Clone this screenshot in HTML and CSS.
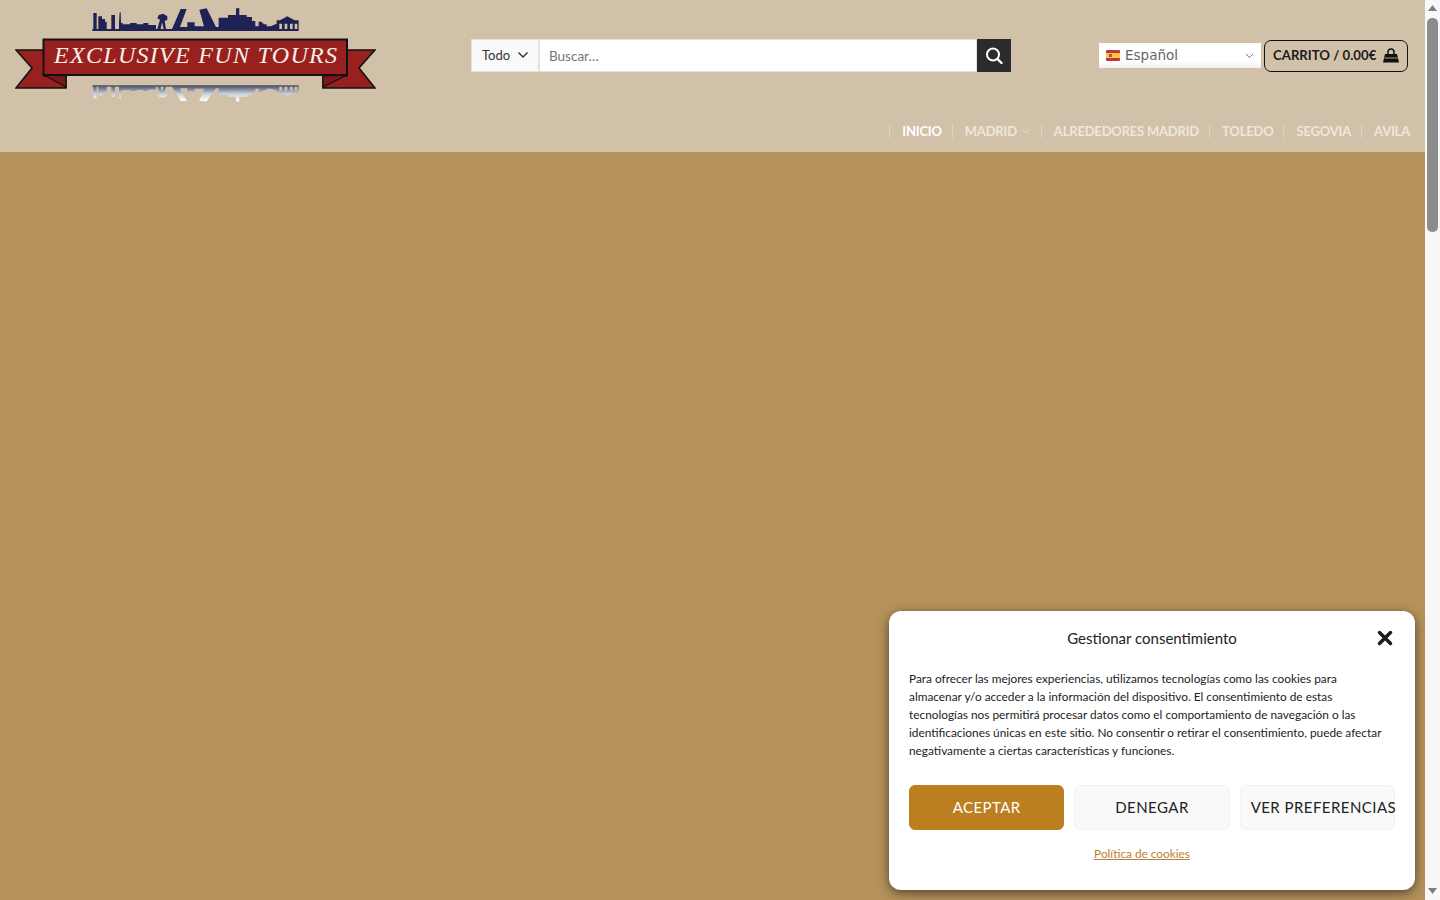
FILE: index.html
```html
<!DOCTYPE html>
<html lang="es">
<head>
    <meta charset="UTF-8">
    <meta name="viewport" content="width=device-width, initial-scale=1.0">
    <title>Exclusive Fun Tours</title>

    <link rel="stylesheet" href="styles.css">
</head>
<body>

    <div class="page">
        <header class="header">
            <div class="header-top">
                <a class="logo" href="#">
                    <svg width="361" height="96" viewBox="15 7 361 96">
                        <defs>
                            <linearGradient id="fade" x1="0" y1="0" x2="0" y2="1">
                                <stop offset="0.1" stop-color="#ffffff"></stop>
                                <stop offset="0.5" stop-color="#c5ccd8"></stop>
                                <stop offset="1" stop-color="#3c4360"></stop>
                            </linearGradient>
                            <path id="skyline" fill-rule="evenodd" transform="translate(80 0) scale(.3333)" d="M37 90V84H40V36H50V84H55V46H66V54H75V62H80V84H94V42H105V84H117V66L119 34H122L123 66H128V70H150V66H170V70H190V66H205V72H228V84H232L240 56L232 52L236 42L250 38L262 46L262 56L254 60L258 84H276L302 24H320L300 78H322V64H344V76H372L358 26L380 22L408 78H416V50H444V42H468V22H478V42H500V48H516V60H526V76H536V62H544L552 70H560V76H572L590 68V58H600L622 46L644 58H656V90ZM598 68H606V84H598ZM614 68H622V84H614ZM630 68H638V84H630ZM644 68H652V84H644ZM242 84L246 64L251 84Z"></path>
                        </defs>
                        <use href="#skyline" fill="#1f2255"></use>
                        <use href="#skyline" fill="url(#fade)" transform="translate(0 85) scale(1 -.72) translate(0 -29)" opacity="0.95"></use>

                        <polygon points="16,49 44,49 44,75 66,75 66,87 16,87 32,67" fill="#98201f" stroke="#111" stroke-width="1.6"></polygon>
                        <polygon points="375,49 347,49 347,75 323,75 323,87 375,87 359,67" fill="#98201f" stroke="#111" stroke-width="1.6"></polygon>
                        <polygon points="44,74 66,86 66,75" fill="#7e1719" stroke="#111" stroke-width="1.2"></polygon>
                        <polygon points="347,74 323,86 323,75" fill="#7e1719" stroke="#111" stroke-width="1.2"></polygon>
                        <rect x="43.5" y="38.500" width="303.5" height="35.500" fill="#98201f" stroke="#111" stroke-width="2"></rect>
                        <text class="logo-text" x="54" y="62" textLength="283" lengthAdjust="spacing">EXCLUSIVE FUN TOURS</text>
                    </svg>
                </a>

                <form class="search">
                    <div class="search-cat">
                        <span>Todo</span>
                        <svg width="12" height="8" viewBox="0 0 12 8"><path d="M1.5 1.5L6 6l4.500-4.500" fill="none" stroke="#333" stroke-width="1.400"></path></svg>
                    </div>
                    <div class="search-input">Buscar…</div>
                    <div class="search-btn">
                        <svg width="18" height="18" viewBox="0 0 18 18"><circle cx="8" cy="7.500" r="6" fill="none" stroke="#fff" stroke-width="2"></circle><path d="M12.500 12L16.500 16" stroke="#fff" stroke-width="2.400" stroke-linecap="round"></path></svg>
                    </div>
                </form>

                <div class="lang">
                    <svg class="flag" width="14" height="11" viewBox="0 0 14 11">
                        <rect width="14" height="11" rx="1" fill="#c8333a"></rect>
                        <rect y="3" width="14" height="5" fill="#f6c945"></rect>
                        <rect x="3" y="4" width="3" height="3" fill="#b5573a"></rect>
                    </svg>
                    <span class="lang-name">Español</span>
                    <svg class="lang-arrow" width="9" height="6" viewBox="0 0 9 6"><path d="M1 1l3.500 3.500L8 1" fill="none" stroke="#777" stroke-width="1"></path></svg>
                </div>

                <a class="cart" href="#">
                    <span>CARRITO / 0.00€</span>
                    <svg width="16" height="15" viewBox="0 0 16 15">
                        <path d="M5 6V4a3 3 0 0 1 6 0v2" fill="none" stroke="#111" stroke-width="1.500"></path>
                        <path d="M2 6H14L16 14.500H0Z" fill="#111"></path>
                        <path d="M1.500 10H14.500" stroke="#d2c1a9" stroke-width="0.800"></path>
                    </svg>
                </a>
            </div>

            <nav class="nav">
                <a class="nav-item nav-active" href="#">INICIO</a>
                <a class="nav-item" href="#">MADRID
                    <svg width="10" height="6" viewBox="0 0 10 6"><path d="M1 1l4 4 4-4" fill="none" stroke="#e6dccb" stroke-width="1"></path></svg>
                </a>
                <a class="nav-item" href="#">ALREDEDORES MADRID</a>
                <a class="nav-item" href="#">TOLEDO</a>
                <a class="nav-item" href="#">SEGOVIA</a>
                <a class="nav-item" href="#">AVILA</a>
            </nav>
        </header>

        <main class="main"></main>
    </div>

    <div class="scrollbar">
        <svg width="9" height="6" viewBox="0 0 9 6"><path d="M4.500 0L9 6H0Z" fill="#7d7d7d"></path></svg>
        <div class="scroll-track">
            <div class="scroll-thumb"></div>
        </div>
        <svg width="9" height="6" viewBox="0 0 9 6"><path d="M0 0H9L4.500 6Z" fill="#7d7d7d"></path></svg>
    </div>

    <div class="consent">
        <div class="consent-head">
            <p class="consent-title">Gestionar consentimiento</p>
            <svg class="consent-close" width="16" height="16" viewBox="0 0 16 16"><path d="M2.500 2.500L13.500 13.500M13.500 2.500L2.500 13.500" stroke="#1a1a1a" stroke-width="3.500" stroke-linecap="round"></path></svg>
        </div>
        <p class="consent-text">Para ofrecer las mejores experiencias, utilizamos tecnologías como las cookies para almacenar y/o acceder a la información del dispositivo. El consentimiento de estas tecnologías nos permitirá procesar datos como el comportamiento de navegación o las identificaciones únicas en este sitio. No consentir o retirar el consentimiento, puede afectar negativamente a ciertas características y funciones.</p>
        <div class="consent-btns">
            <div class="btn btn-accept">ACEPTAR</div>
            <div class="btn">DENEGAR</div>
            <div class="btn btn-prefs">VER PREFERENCIAS</div>
        </div>
        <div class="consent-links">
            <a href="#">Política de cookies</a>
        </div>
    </div>

</body>
</html>
```

FILE: styles.css
```css
* {
    padding: 0;
    margin: 0;
    box-sizing: border-box;
}

html {
    font-family: Lato, sans-serif;
    font-size: 14px;
}

body {
    display: flex;
    height: 900px;
    overflow: hidden;
    background-color: #b6935c;
}

a {
    text-decoration: none;
    color: inherit;
}

.page {
    flex: 1;
    display: flex;
    flex-direction: column;
}

.header {
    height: 152px;
    background-color: #d2c1a9;
}

.header-top {
    height: 111px;
    padding-left: 15px;
    display: flex;
    align-items: center;
}

.logo {
    display: flex;
    width: 361px;
}

.logo-text {
    font-family: "Liberation Serif", serif;
    font-style: italic;
    font-size: 24px;
    fill: #f8efe6;
}

.search {
    width: 540px;
    height: 33px;
    margin-left: 95px;
    display: flex;
}

.search-cat {
    width: 68px;
    padding-left: 10px;
    padding-right: 9px;
    padding-bottom: 2px;

    display: flex;
    align-items: center;
    justify-content: space-between;

    background-color: #f9f9f9;
    border: 1px solid #e6e2da;
    font-size: 13px;
    color: #333;
}

.search-input {
    flex: 1;
    padding-left: 9px;

    display: flex;
    align-items: center;

    background-color: #fff;
    border: 1px solid #e4e2dc;
    font-size: 13.5px;
    color: #777;
}

.search-btn {
    width: 34px;

    display: flex;
    align-items: center;
    justify-content: center;

    background-color: #2b2b2b;
}

.lang {
    width: 162px;
    height: 25px;
    margin-left: 88px;
    padding: 0 7px;

    display: flex;
    align-items: center;

    background: linear-gradient(to bottom, #fff 70%, #f1f1f1);
}

.lang-name {
    flex: 1;
    margin-left: 5px;
    padding-bottom: 2px;

    font-family: "DejaVu Sans", sans-serif;
    font-size: 13.5px;
    color: #666;
}

.cart {
    width: 144px;
    height: 32px;
    margin-left: 3px;
    padding: 0 8px;

    display: flex;
    align-items: center;
    justify-content: space-between;

    border: 1.5px solid #111;
    border-radius: 7px;

    font-weight: 700;
    font-size: 13.2px;
    color: #1c1c1c;
}

.cart span {
    padding-bottom: 1px;
}

.nav {
    height: 39px;
    padding-right: 15px;

    display: flex;
    justify-content: flex-end;
    align-items: center;
}

.nav-item {
    height: 14px;
    padding-left: 12px;
    margin-left: 10px;

    display: flex;
    align-items: center;
    gap: 4px;

    border-left: 1px solid #dfd3c0;

    font-weight: 700;
    font-size: 13px;
    letter-spacing: -0.2px;
    color: #eee7db;
}

.nav-active {
    color: #fff;
}

.main {
    flex: 1;
}

.scrollbar {
    width: 15px;
    padding: 5px 0 6px;

    display: flex;
    flex-direction: column;
    align-items: center;
    gap: 3px;

    background-color: #f8f8f8;
}

.scroll-track {
    flex: 1;
    width: 100%;
    padding: 4px 2px 0;
}

.scroll-thumb {
    height: 214px;
    background-color: #8c8c8c;
    border-radius: 5px;
}

.consent {
    position: absolute;
    left: 889px;
    top: 611px;

    width: 526px;
    height: 279px;
    padding: 17px 20px 0;

    background-color: #fff;
    border-radius: 12px;
    box-shadow: 0 3px 12px rgba(0, 0, 0, 0.55);
    color: #222;
}

.consent-head {
    height: 20px;

    display: grid;
    grid-template-columns: 1fr auto 1fr;
    align-items: center;
}

.consent-title {
    grid-column: 2;
    padding-bottom: 1px;
    font-size: 15px;
}

.consent-close {
    grid-column: 3;
    justify-self: end;
    margin-right: 2px;
}

.consent-text {
    margin-top: 22px;
    padding-right: 10px;
    font-size: 11.85px;
    line-height: 18px;
}

.consent-btns {
    margin-top: 25px;

    display: grid;
    grid-template-columns: repeat(3, minmax(0, 1fr));
    gap: 10px;
}

.btn {
    height: 45px;
    padding-bottom: 1px;

    display: flex;
    align-items: center;
    justify-content: center;

    background-color: #f9f9f9;
    border: 1px solid #f2f2f2;
    border-radius: 6px;

    font-size: 15px;
    letter-spacing: 0.45px;
    color: #222;
    white-space: nowrap;
}

.btn-accept {
    background-color: #bb7f1f;
    border-color: #bb7f1f;
    color: #fff;
}

.btn-prefs {
    justify-content: flex-start;
    padding-left: 10px;
}

.consent-links {
    margin-top: 16px;
    padding-right: 20px;

    text-align: center;
    font-size: 11.8px;
}

.consent-links a {
    color: #b7812f;
    text-decoration: underline;
}
```
